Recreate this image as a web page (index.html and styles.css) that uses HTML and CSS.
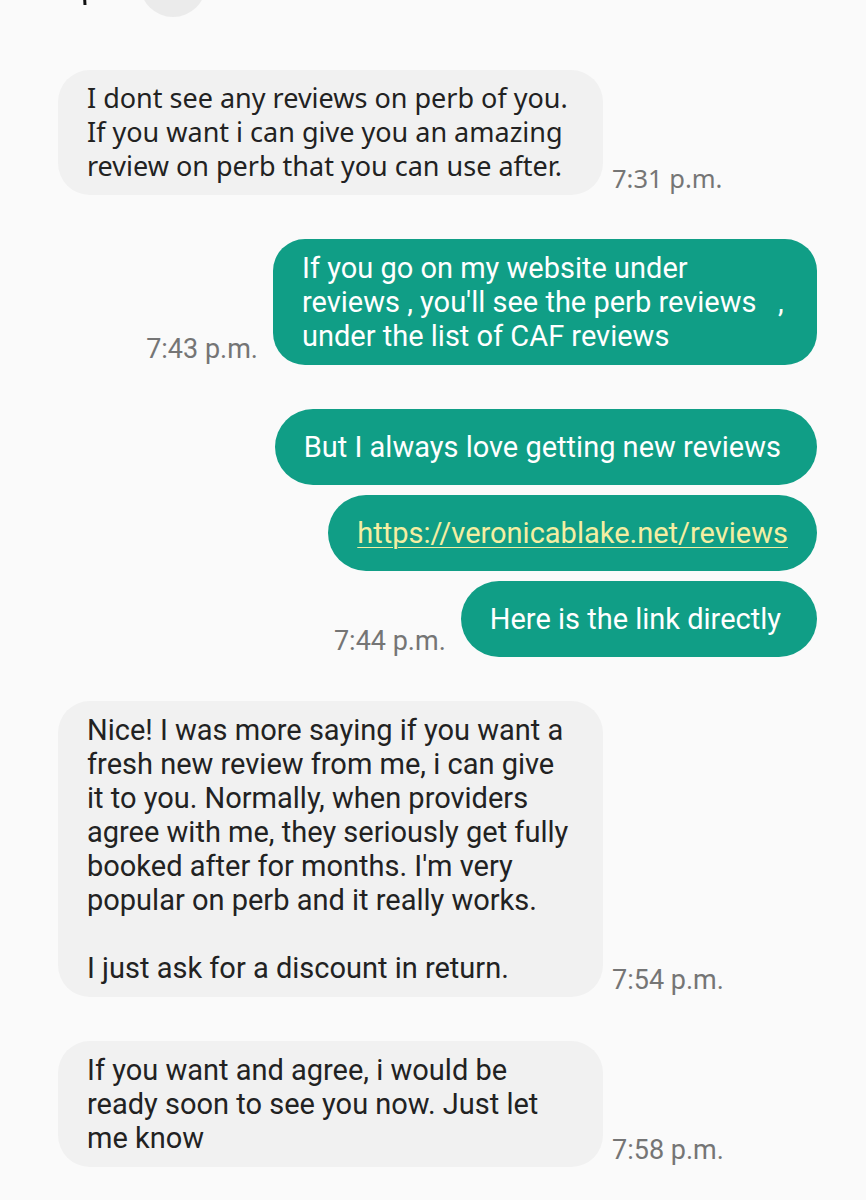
FILE: index.html
```html
<!DOCTYPE html>
<html lang="en">
<head>
  <meta charset="UTF-8" />
  <meta name="viewport" content="width=device-width, initial-scale=1.0" />
  <title>Messages</title>

  <!-- Styles -->
  <link rel="stylesheet" href="styles.css">
</head>

<body>
  <!-- Top bar, cut off by the screenshot -->
  <header class="top-bar">
    <svg class="back-arrow" width="20" height="20" viewBox="0 0 20 20">
      <path d="M2 2 L3 20" stroke="#111" stroke-width="3" stroke-linecap="round" fill="none" />
    </svg>
    <div class="avatar"></div>
  </header>

  <main class="thread">
    <!-- Incoming -->
    <div class="group">
      <div class="row in">
        <div class="bubble in first">I dont see any reviews on perb of you. If you want i can give you an amazing review on perb that you can use after.</div>
        <span class="time first">7:31 p.m.</span>
      </div>
    </div>

    <!-- Outgoing -->
    <div class="group">
      <div class="row out">
        <span class="time">7:43 p.m.</span>
        <div class="bubble out">If you go on my website under reviews , you'll see the perb reviews &nbsp;&nbsp;, under the list of CAF reviews</div>
      </div>
    </div>

    <div class="group">
      <div class="row out">
        <div class="bubble out single">But I always love getting new reviews</div>
      </div>
      <div class="row out">
        <div class="bubble out single link-bubble"><a href="#" class="link">https://veronicablake.net/reviews</a></div>
      </div>
      <div class="row out">
        <span class="time">7:44 p.m.</span>
        <div class="bubble out single">Here is the link directly</div>
      </div>
    </div>

    <div class="group">
      <div class="row in">
        <div class="bubble in">Nice! I was more saying if you want a fresh new review from me, i can give it to you. Normally, when providers agree with me, they seriously get fully booked after for months. I'm very popular on perb and it really works.<br><br>I just ask for a discount in return.</div>
        <span class="time">7:54 p.m.</span>
      </div>
    </div>

    <div class="group">
      <div class="row in">
        <div class="bubble in">If you want and agree, i would be ready soon to see you now. Just let me know</div>
        <span class="time">7:58 p.m.</span>
      </div>
    </div>
  </main>
</body>
</html>
```

FILE: styles.css
```css
* {
  box-sizing: border-box;
  margin: 0;
  padding: 0;
}

body {
  font-family: 'Roboto', sans-serif;
  background: #fafafa;
  color: #212121;
  width: 866px;
  height: 1200px;
  overflow: hidden;
}

.top-bar {
  height: 18px;
  overflow: hidden;
  display: flex;
  align-items: flex-end;
  padding-left: 82px;
}

.back-arrow {
  margin-top: -15px;
  align-self: flex-start;
}

.avatar {
  width: 66px;
  height: 66px;
  border-radius: 50%;
  background: #ebebeb;
  margin-left: 38px;
  margin-bottom: 1px;
  flex-shrink: 0;
}

.thread {
  display: flex;
  flex-direction: column;
  gap: 44px;
  padding-top: 52px;
}

.group {
  display: flex;
  flex-direction: column;
  gap: 10px;
}

.row {
  display: flex;
  align-items: flex-end;
}

.row.in {
  padding-left: 58px;
}

.row.out {
  justify-content: flex-end;
  padding-right: 49px;
}

.bubble {
  font-size: 29px;
  line-height: 34px;
  border-radius: 32px;
  padding: 12px 30px 12px 29px;
}

.bubble.in {
  width: 545px;
  background: #f1f1f1;
  color: #222;
}

.bubble.first {
  font-family: 'Noto Sans', sans-serif;
  font-size: 27px;
  padding-top: 11px;
}

.bubble.out {
  max-width: 544px;
  background: #109e86;
  color: #fff;
}

.bubble.single {
  min-height: 76px;
  display: flex;
  align-items: center;
  border-radius: 38px;
  padding-right: 36px;
}

.bubble.link-bubble {
  padding-right: 29px;
}

.link {
  color: #f4eea2;
  text-decoration: underline;
  text-decoration-thickness: 1px;
  text-underline-offset: 4px;
}

.time {
  font-size: 27px;
  line-height: 30px;
  color: #757575;
  white-space: nowrap;
}

.row.in .time {
  margin-left: 9px;
  margin-bottom: 2px;
}

.row.out .time {
  margin-right: 15px;
  margin-bottom: 1px;
}

.time.first {
  font-family: 'Noto Sans', sans-serif;
  font-size: 25.5px;
  margin-bottom: 0;
}
```
